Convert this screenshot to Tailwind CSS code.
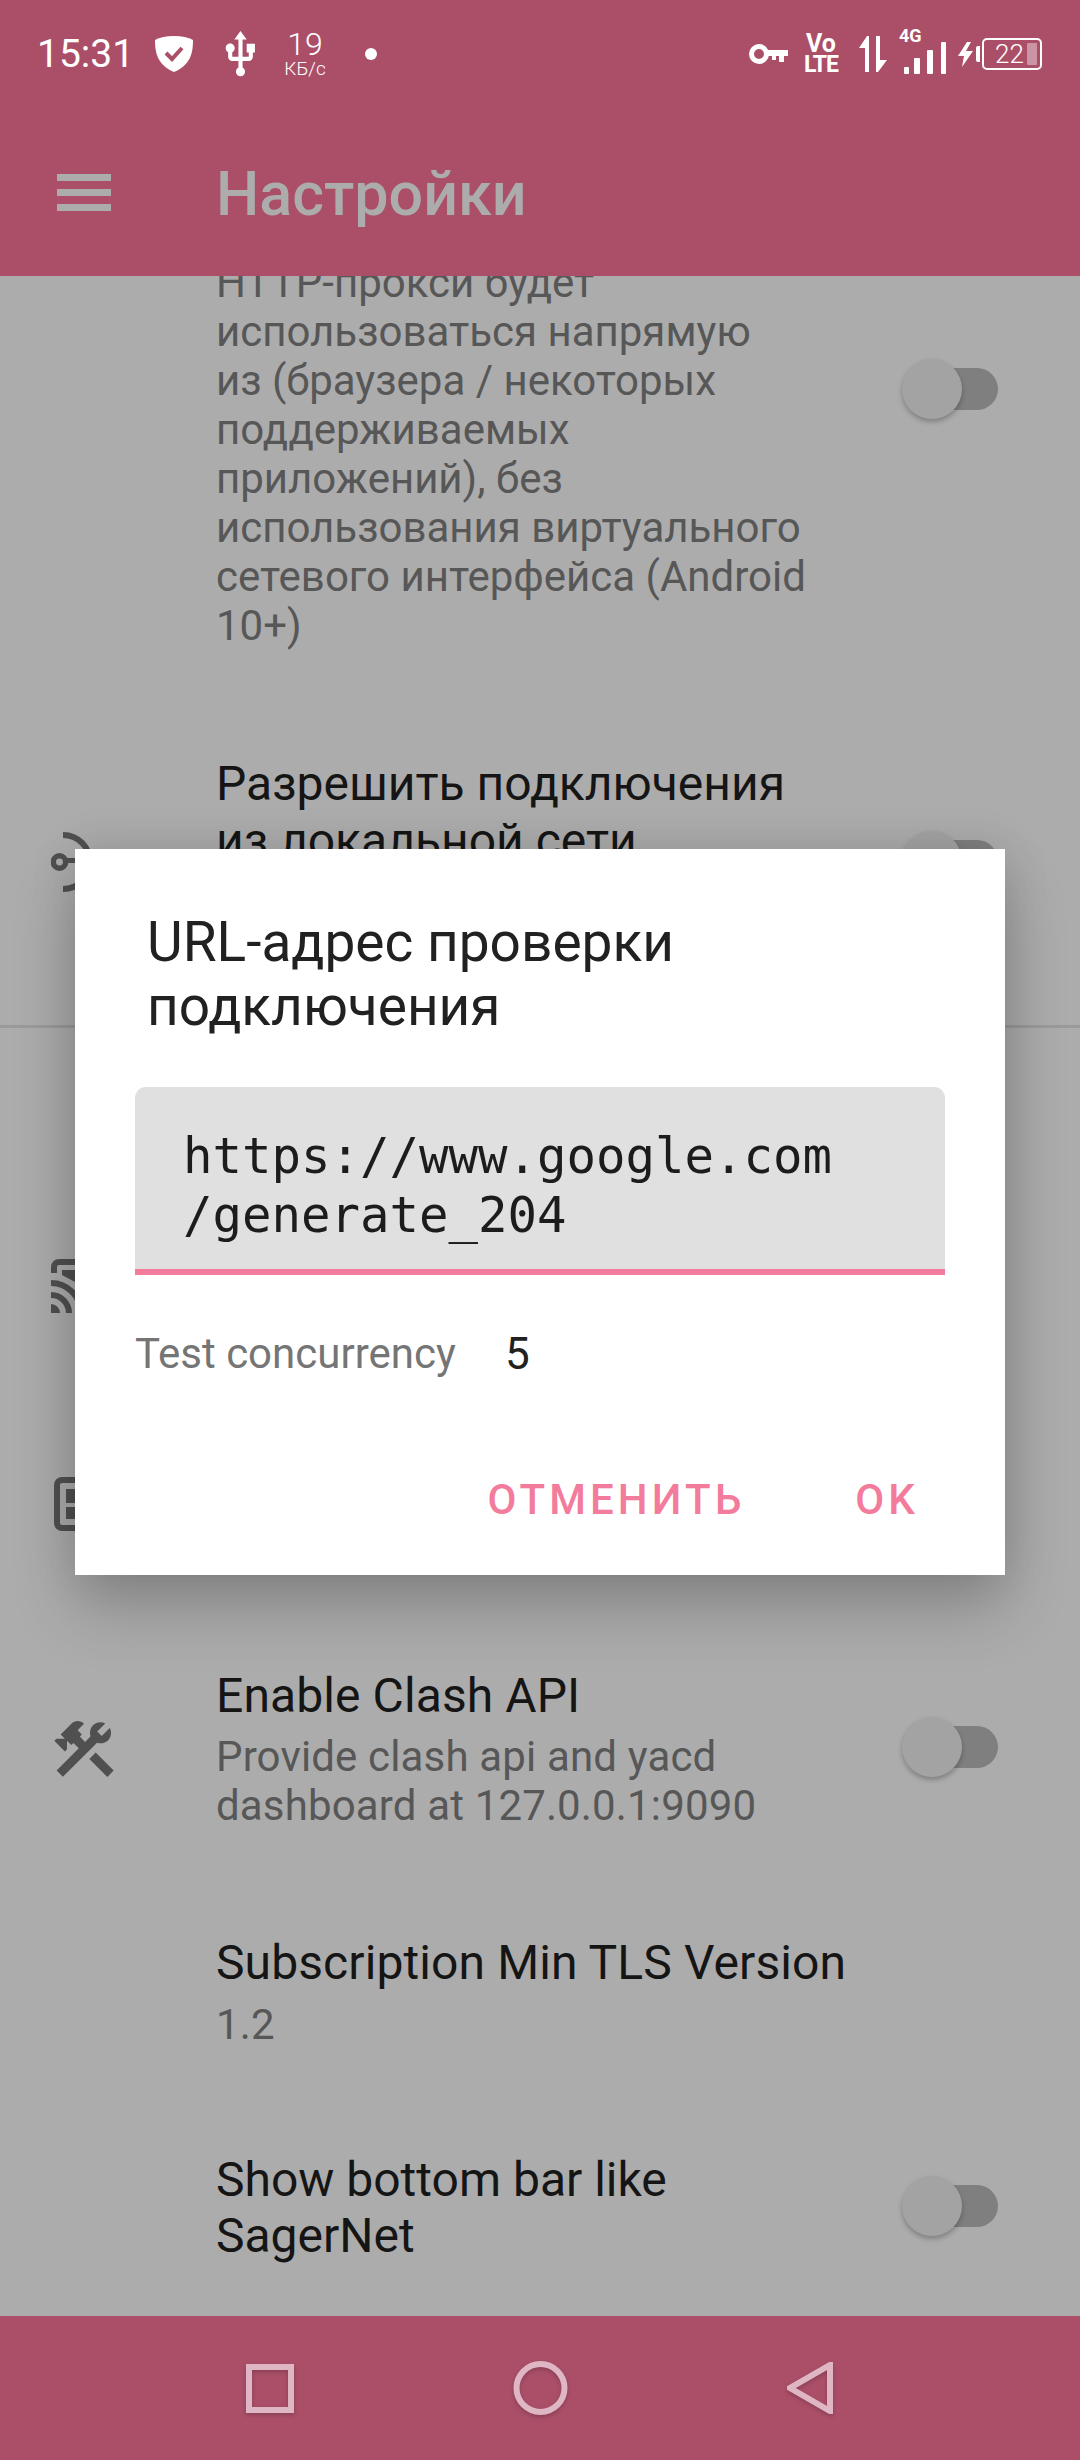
<!DOCTYPE html>
<html lang="ru">
<head>
    <meta charset="UTF-8">
    <meta name="viewport" content="width=device-width, initial-scale=1.0">
    <title>Настройки</title>
    <script src="https://cdn.jsdelivr.net/npm/@tailwindcss/browser@4"></script>
</head>
<body class="bg-[#acacac]">
<div class="relative w-[1080px] h-[2460px] overflow-hidden flex flex-col font-['Roboto',sans-serif] bg-[#acacac]">

    <!-- Status bar + toolbar -->
    <header class="relative z-10 bg-[#ab4f69] h-[276px] shrink-0">
        <div class="h-[108px] flex items-center justify-between pl-[37px] pr-[38px] text-white">
            <div class="flex items-center">
                <span class="text-[39px] leading-none w-[118px]">15:31</span>
                <svg class="w-[38px] h-[36px]" viewBox="0 0 38 36">
                    <path fill="#fff" d="M19 0C11 0 5 1.500 0 4C0 18 3 29 19 36C35 29 38 18 38 4C33 1.500 27 0 19 0Z"/>
                    <path fill="none" stroke="#ab4f69" stroke-width="4" d="M11 17L17 23L27 12"/>
                </svg>
                <svg class="w-[33px] h-[46px] ml-[31px]" viewBox="4 1 16 21.5" preserveAspectRatio="none">
                    <path fill="#fff" d="M15,7V11H16V13H13V5H15L12,1L9,5H11V13H8V10.93C8.7,10.56 9.2,9.85 9.2,9C9.2,7.78 8.21,6.8 7,6.8C5.79,6.8 4.8,7.78 4.8,9C4.8,9.85 5.3,10.56 6,10.93V13A2,2 0 0,0 8,15H11V18.05C10.29,18.41 9.8,19.15 9.8,20A2.2,2.2 0 0,0 12,22.2A2.2,2.2 0 0,0 14.2,20C14.2,19.15 13.71,18.41 13,18.05V15H16A2,2 0 0,0 18,13V11H19V7H15Z"/>
                </svg>
                <div class="flex flex-col items-center ml-[26px] w-[44px] font-light">
                    <span class="text-[32px] leading-[26px]">19</span>
                    <span class="text-[19px] leading-[18px] mt-[3px] whitespace-nowrap">КБ/с</span>
                </div>
                <span class="w-[12px] h-[12px] rounded-full bg-white ml-[38px]"></span>
            </div>
            <div class="flex items-center">
                <svg class="w-[40px] h-[22px]" viewBox="0 0 40 22">
                    <circle cx="11" cy="11" r="7.500" fill="none" stroke="#fff" stroke-width="5"/>
                    <path fill="#fff" d="M18 7H40V13H36V19H31V13H28V17H24V13H18Z"/>
                </svg>
                <div class="flex flex-col items-center ml-[14px] w-[38px] font-bold">
                    <span class="text-[25px] leading-[21px]">Vo</span>
                    <span class="text-[23px] leading-[21px] tracking-[-1px] whitespace-nowrap">LTE</span>
                </div>
                <svg class="w-[28px] h-[36px] ml-[19px]" viewBox="0 0 28 36">
                    <path fill="#fff" d="M0 12L8 0H10V36H6V12Z"/>
                    <path fill="#fff" d="M17 0H21V24H28L19 36H17Z"/>
                </svg>
                <div class="relative w-[48px] h-[40px] ml-[12px]">
                    <span class="absolute left-0 -top-[7px] text-[18px] leading-none font-bold">4G</span>
                    <span class="absolute left-[5px] bottom-0 w-[5px] h-[7px] rounded-[1px] bg-white"></span>
                    <span class="absolute left-[15px] bottom-0 w-[6px] h-[16px] rounded-[1px] bg-white"></span>
                    <span class="absolute left-[28px] bottom-0 w-[6px] h-[24px] rounded-[1px] bg-white"></span>
                    <span class="absolute left-[42px] bottom-0 w-[5px] h-[32px] rounded-[1px] bg-white"></span>
                </div>
                <svg class="w-[15px] h-[25px] ml-[11px]" viewBox="0 0 15 25">
                    <path fill="#fff" d="M9 0L0 14H6L4 25L15 9H8L13 0Z"/>
                </svg>
                <span class="w-[4px] h-[16px] ml-[3px] bg-white rounded-l-[2px]"></span>
                <div class="ml-[2px] w-[60px] h-[32px] border-2 border-white rounded-[5px] flex items-center pl-[11px]">
                    <span class="text-[26px] leading-none font-light w-[32px]">22</span>
                    <span class="w-[10px] h-[22px] bg-white/40 rounded-[1px]"></span>
                </div>
            </div>
        </div>
        <div class="h-[168px] flex items-center text-[#acacac]">
            <div class="w-[217px] pl-[57px] shrink-0">
                <div class="w-[54px] flex flex-col gap-[8px]">
                    <span class="h-[7px] bg-[#acacac]"></span>
                    <span class="h-[7px] bg-[#acacac]"></span>
                    <span class="h-[7px] bg-[#acacac]"></span>
                </div>
            </div>
            <span class="text-[61px] leading-none font-medium -ml-[1px] pt-[4px]">Настройки</span>
        </div>
    </header>

    <!-- Settings list -->
    <main class="flex-1 min-h-0 overflow-hidden flex flex-col -mt-[202px]">
        <section class="flex items-center h-[630px] shrink-0">
            <div class="w-[216px] shrink-0"></div>
            <p class="w-[598px] self-end pb-[54px] text-[42px] leading-[49px] text-[#575757]">HTTP-прокси будет использоваться напрямую<br>из (браузера / некоторых поддерживаемых приложений), без использования виртуального сетевого интерфейса (Android 10+)</p>
            <div class="ml-auto mr-[82px] relative w-[96px] h-[60px] shrink-0">
                <span class="absolute right-0 top-[9px] w-[78px] h-[42px] rounded-full bg-[#7f7f7f]"></span>
                <span class="absolute left-0 top-0 w-[60px] h-[60px] rounded-full bg-[#a3a3a3] shadow-[0_3px_5px_rgba(0,0,0,0.25)]"></span>
            </div>
        </section>

        <section class="flex items-center h-[314px] shrink-0">
            <div class="w-[216px] pl-[51px] shrink-0">
                <svg class="w-[66px] h-[66px]" viewBox="0 0 66 66" fill="none" stroke="#505050" stroke-width="6">
                    <circle cx="8.500" cy="34" r="6.200" stroke-width="5.500"/>
                    <path d="M14 32.500H30" stroke-width="5"/>
                    <path d="M12 7A27 27 0 0 1 39 34A27 27 0 0 1 12 61"/>
                </svg>
            </div>
            <h3 class="w-[588px] self-start pt-[52px] text-[48px] leading-[56.5px] text-[#151515]">Разрешить подключения из локальной сети</h3>
            <div class="ml-auto mr-[82px] relative w-[96px] h-[60px] shrink-0">
                <span class="absolute right-0 top-[9px] w-[78px] h-[42px] rounded-full bg-[#7f7f7f]"></span>
                <span class="absolute left-0 top-0 w-[60px] h-[60px] rounded-full bg-[#a3a3a3] shadow-[0_3px_5px_rgba(0,0,0,0.25)]"></span>
            </div>
        </section>

        <div class="h-[3px] shrink-0 bg-[#9a9a9a] mt-[7px]"></div>
        <div class="h-[152px] shrink-0"></div>

        <section class="flex items-center h-[212px] shrink-0 pl-[51px]">
            <svg class="w-[66px] h-[66px]" viewBox="0 0 66 66" fill="none" stroke="#505050" stroke-width="6">
                <path d="M3 20V14A5 5 0 0 1 8 9H60"/>
                <path fill="#505050" stroke="none" d="M11 17H40V40L24 29L11 22Z"/>
                <path d="M0 30A30 30 0 0 1 30 60M0 42A18 18 0 0 1 18 60"/>
                <path fill="#505050" stroke="none" d="M0 51A9 9 0 0 1 9 60H0Z"/>
            </svg>
        </section>
        <section class="flex items-center h-[224px] shrink-0 pl-[54px]">
            <svg class="w-[60px] h-[54px]" viewBox="0 0 60 54" fill="none" stroke="#505050" stroke-width="6">
                <rect x="3" y="3" width="54" height="48" rx="5"/>
                <path fill="#505050" stroke="none" d="M12 12H40V26H12ZM12 30H40V42H12Z"/>
            </svg>
        </section>

        <section class="flex items-center h-[266px] shrink-0">
            <div class="w-[216px] pl-[48px] shrink-0">
                <svg class="w-[72px] h-[72px]" viewBox="0 0 24 24">
                    <path fill="#505050" d="M13.78 15.3L19.78 21.3L21.89 19.14L15.89 13.14L13.78 15.3M17.5 10.1C17.11 10.1 16.69 10.05 16.36 9.91L4.97 21.25L2.86 19.14L10.27 11.74L8.5 9.96L7.78 10.66L6.33 9.25V12.11L5.63 12.81L2.11 9.25L2.81 8.55H5.62L4.22 7.14L7.78 3.58C8.95 2.41 10.83 2.41 12 3.58L9.89 5.74L11.3 7.14L10.59 7.85L12.38 9.63L14.2 7.75C14.06 7.42 14 7 14 6.63C14 4.66 15.56 3.11 17.5 3.11C18.09 3.11 18.61 3.25 19.08 3.53L16.41 6.2L17.91 7.7L20.58 5.03C20.86 5.5 21 6 21 6.63C21 8.59 19.45 10.1 17.5 10.1Z"/>
                </svg>
            </div>
            <div class="w-[598px]">
                <h3 class="text-[48px] leading-[56.5px] tracking-[0.1px] text-[#151515]">Enable Clash API</h3>
                <p class="text-[42px] leading-[49px] tracking-[0.15px] text-[#575757] mt-[8px]">Provide clash api and yacd dashboard at 127.0.0.1:9090</p>
            </div>
            <div class="ml-auto mr-[82px] mb-[5px] relative w-[96px] h-[60px] shrink-0">
                <span class="absolute right-0 top-[9px] w-[78px] h-[42px] rounded-full bg-[#7f7f7f]"></span>
                <span class="absolute left-0 top-0 w-[60px] h-[60px] rounded-full bg-[#a3a3a3] shadow-[0_3px_5px_rgba(0,0,0,0.25)]"></span>
            </div>
        </section>

        <section class="flex items-center h-[220px] shrink-0 pl-[216px]">
            <div>
                <h3 class="text-[48px] leading-[56.5px] tracking-[0.1px] text-[#151515]">Subscription Min TLS Version</h3>
                <p class="text-[42px] leading-[49px] tracking-[0.15px] text-[#575757] mt-[8px]">1.2</p>
            </div>
        </section>

        <section class="flex items-center h-[212px] shrink-0 pl-[216px]">
            <h3 class="w-[598px] text-[48px] leading-[56.5px] text-[#151515]">Show bottom bar like SagerNet</h3>
            <div class="ml-auto mr-[82px] mb-[5px] relative w-[96px] h-[60px] shrink-0">
                <span class="absolute right-0 top-[9px] w-[78px] h-[42px] rounded-full bg-[#7f7f7f]"></span>
                <span class="absolute left-0 top-0 w-[60px] h-[60px] rounded-full bg-[#a3a3a3] shadow-[0_3px_5px_rgba(0,0,0,0.25)]"></span>
            </div>
        </section>
    </main>

    <!-- Navigation bar -->
    <nav class="relative z-10 h-[144px] shrink-0 bg-[#ab4f69] flex items-center justify-between pl-[246px] pr-[247px]">
        <svg class="w-[48px] h-[49px] drop-shadow-[0_2px_2px_rgba(0,0,0,0.2)]" viewBox="0 0 48 49" fill="none" stroke="#dfb7c4" stroke-width="6">
            <rect x="3" y="3" width="42" height="43"/>
        </svg>
        <svg class="w-[55px] h-[54px] drop-shadow-[0_2px_2px_rgba(0,0,0,0.2)]" viewBox="0 0 55 54" fill="none" stroke="#dfb7c4" stroke-width="6">
            <circle cx="27.500" cy="27" r="24"/>
        </svg>
        <svg class="w-[46px] h-[52px] drop-shadow-[0_2px_2px_rgba(0,0,0,0.2)]" viewBox="0 0 46 52" fill="none" stroke="#dfb7c4" stroke-width="6">
            <path d="M43 3V49L3 26Z"/>
        </svg>
    </nav>

    <!-- Dialog -->
    <div class="absolute z-20 left-[75px] top-[849px] w-[930px] h-[726px] bg-white shadow-[0_34px_60px_rgba(0,0,0,0.2),0_0_44px_rgba(0,0,0,0.12)] flex flex-col pt-[61px]">
        <h2 class="px-[72px] text-[55px] leading-[64px] text-[#212121]">URL-адрес проверки подключения</h2>
        <div class="mx-[60px] mt-[49px] h-[188px] bg-[#e0e0e0] rounded-t-[11px] border-b-[6px] border-[#f37b9c] pl-[48px] pt-[40px] font-['DejaVu_Sans_Mono',monospace] text-[49px] leading-[59px] text-[#1c1c1c]">
            <div>https://www.google.com</div>
            <div>/generate_204</div>
        </div>
        <div class="flex items-center mx-[60px] mt-[50px] h-[58px]">
            <span class="w-[370px] text-[42px] leading-none text-[#757575]">Test concurrency</span>
            <span class="text-[44px] leading-none text-[#212121]">5</span>
        </div>
        <div class="flex justify-end items-center mt-[96px] pr-[86px] text-[42px] leading-none font-medium tracking-[4.1px] text-[#f37b9c]">
            <span>ОТМЕНИТЬ</span>
            <span class="ml-[110px]">OK</span>
        </div>
    </div>
</div>
</body>
</html>
